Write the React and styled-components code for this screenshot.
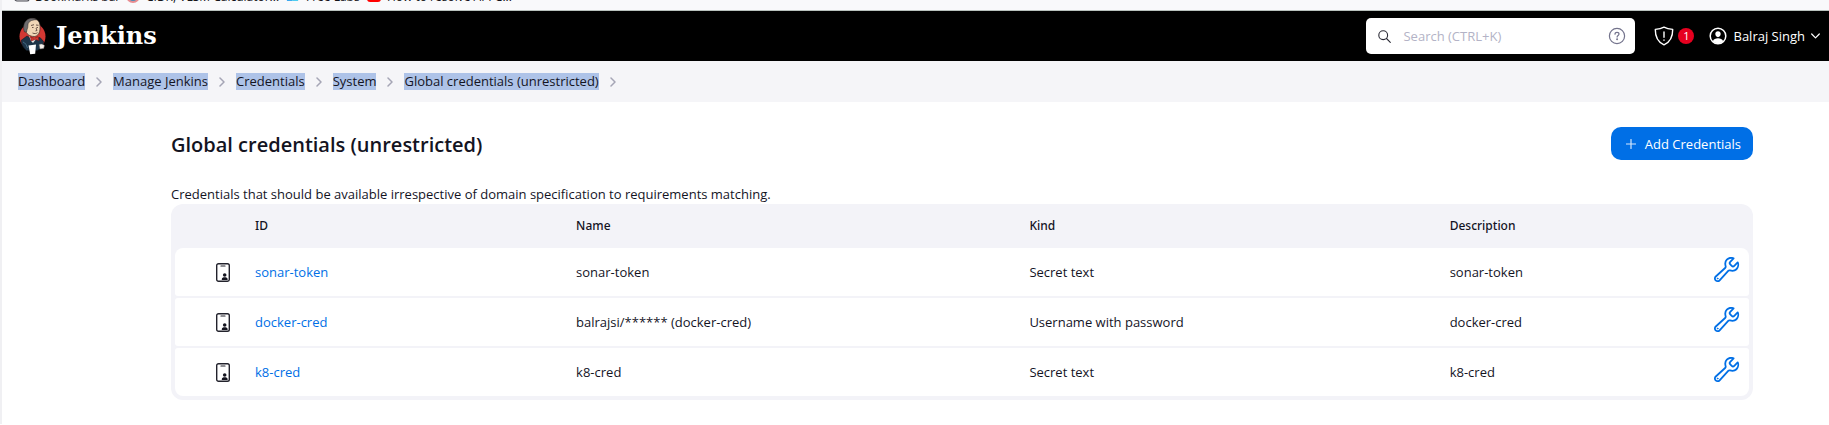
import React from "react";
import styled, { createGlobalStyle } from "styled-components";

const GlobalStyle = createGlobalStyle`
  *, *::before, *::after { box-sizing: border-box; }
  body {
    margin: 0;
    background: #fff;
    color: #14141f;
    font: 13px/20px "Open Sans", "Noto Sans", sans-serif;
  }
  button, input { font: inherit; }
  a { color: inherit; text-decoration: none; }
  svg { display: block; flex: none; }
`;

const Page = styled.div`
  border-left: 2px solid #f0f0f3;
`;

const BookmarksBar = styled.nav`
  display: flex;
  align-items: flex-end;
  height: 11px;
  overflow: hidden;
  padding-left: 12px;
  padding-bottom: 5px;
  gap: 14px;
  background: #f9f9fb;
  border-bottom: 1px solid #b9c1bd;
  font-size: 12px;
  line-height: 16px;
  color: #15141a;
`;

const Bookmark = styled.a`
  display: flex;
  align-items: center;
  gap: 5px;
  width: ${(p) => p.$width}px;
  white-space: nowrap;
`;

const Header = styled.header`
  display: flex;
  align-items: center;
  height: 50px;
  padding: 0 9px 0 16px;
  background: #000;
  color: #fff;
`;

const Brand = styled.a`
  display: flex;
  align-items: center;
  gap: 9px;
  margin-right: auto;
  font: bold 24px/32px "DejaVu Serif", serif;
`;

const SearchBox = styled.div`
  display: flex;
  align-items: center;
  width: 269px;
  height: 36px;
  padding: 0 9px 0 12px;
  background: #fff;
  border-radius: 5px;
`;

const SearchInput = styled.input`
  flex: 1;
  min-width: 0;
  margin-left: 12px;
  padding: 0;
  border: 0;
  outline: 0;
  background: none;
  color: #14141f;
  &::placeholder { color: #b3b3c6; opacity: 1; }
`;

const IconButton = styled.button`
  display: flex;
  align-items: center;
  gap: ${(p) => p.$gap || 0}px;
  padding: 0;
  border: 0;
  background: none;
  color: inherit;
  cursor: pointer;
`;

const HeaderActions = styled.div`
  display: flex;
  align-items: center;
  gap: 15px;
  margin-left: 19px;
`;

const Badge = styled.span`
  width: 16px;
  height: 16px;
  border-radius: 50%;
  background: #e6001f;
  font-size: 11px;
  line-height: 16px;
  text-align: center;
`;

const Breadcrumbs = styled.nav`
  display: flex;
  align-items: center;
  gap: 11px;
  height: 41px;
  padding-left: 16px;
  background: #f5f5f8;
`;

const Crumb = styled.a`
  height: 17px;
  line-height: 17px;
  background: #aec3e8;
`;

const Main = styled.main`
  padding: 25px 76px 24px 169px;
`;

const TitleBar = styled.div`
  display: flex;
  align-items: center;
  justify-content: space-between;
  margin-bottom: 25px;
`;

const Title = styled.h1`
  margin: 3px 0 0;
  font-size: 20px;
  line-height: 30px;
  font-weight: 600;
`;

const AddLink = styled.a`
  display: flex;
  align-items: center;
  gap: 9px;
  height: 33px;
  padding: 0 12px 0 15px;
  border-radius: 10px;
  background: #006fe6;
  color: #fff;
`;

const Intro = styled.p`
  margin: 0;
  line-height: 19px;
`;

const TablePanel = styled.div`
  padding: 0 4px 2px;
  border-radius: 12px;
  background: #f3f3f8;
`;

const Table = styled.table`
  width: 100%;
  table-layout: fixed;
  border-collapse: separate;
  border-spacing: 0 2px;
`;

const Col = styled.col`
  width: ${(p) => p.$width};
`;

const HeadCell = styled.th`
  height: 40px;
  padding: 0 11px;
  font-family: "Noto Sans", sans-serif;
  font-size: 12px;
  font-weight: 500;
  text-align: left;
`;

const Cell = styled.td`
  height: 48px;
  padding: 0 11px;
  background: #fff;
`;

const IconCell = styled(Cell)`
  padding: 0 0 0 41px;
`;

const ActionCell = styled(Cell)`
  padding: 0 9px 4px 0;
`;

const Row = styled.tr`
  & > td:first-child { border-radius: 3px 0 0 3px; }
  & > td:last-child { border-radius: 0 3px 3px 0; }
  &:first-child > td:first-child { border-top-left-radius: 8px; }
  &:first-child > td:last-child { border-top-right-radius: 8px; }
  &:last-child > td:first-child { border-bottom-left-radius: 8px; }
  &:last-child > td:last-child { border-bottom-right-radius: 8px; }
`;

const IdLink = styled.a`
  color: #006fe6;
`;

const ConfigureLink = styled.a`
  display: flex;
  justify-content: flex-end;
  color: #006fe6;
`;

const FolderIcon = () => (
  <svg width="16" height="16" viewBox="0 0 16 16" fill="#e2e2e6" stroke="#4a4a52" strokeWidth="1.2">
    <rect x="1" y="0" width="14" height="12" rx="2" />
  </svg>
);
const CidrIcon = () => (
  <svg width="16" height="16" viewBox="0 0 16 16">
    <circle cx="8" cy="7" r="7" fill="#e88d92" />
    <circle cx="8" cy="8" r="4" fill="#4a8bb5" />
  </svg>
);
const LabsIcon = () => (
  <svg width="16" height="16" viewBox="0 0 16 16">
    <path d="M1 6h8l-2 6H2z" fill="#3fa9ef" />
    <path d="M7 12l2-8h6l-2 8z" fill="#4fcdf0" />
  </svg>
);
const VideoIcon = () => (
  <svg width="16" height="16" viewBox="0 0 16 16">
    <rect x="1" y="1" width="14" height="12" rx="3" fill="#f00" />
    <path d="M6 4l5 3-5 3z" fill="#fff" />
  </svg>
);

const JenkinsLogo = () => (
  <svg width="29" height="38" viewBox="0 0 29 38">
    <ellipse cx="14.5" cy="19.5" rx="13" ry="13.5" fill="#d33833" />
    <path d="M7 12C6 5 9 1.500 14 1.500c6 0 8.500 4 8 9.500 0 5-2 8-5.500 8.500-5 0-8.500-2.500-9.500-7.500z" fill="#f0d6b7" stroke="#3a302c" strokeWidth=".7" />
    <path d="M6.500 15C4.500 10 6 5 9 3c3-2.200 7-2.200 10-.3-4 0-7.500.8-8.800 3.800-.6 2 0 4-1 5.500l-.7 3z" fill="#6d6b6d" stroke="#2b2523" strokeWidth=".5" />
    <path d="M13 8.500l3-.8M18 8l2.500.3M14 10.500h1.500M18.500 10.500H20M18 11l1 2.500-1.500.4M14.500 16c2 1 4 .6 5-.4" fill="none" stroke="#49352f" strokeWidth=".8" />
    <path d="M3 23.500l6-4.500 6 3.500 7-2 3.500 4-.5 6-6 3H8.500C5.500 31 3.500 28 3 23.500z" fill="#1d3448" stroke="#101820" strokeWidth=".6" />
    <path d="M11 19l3 2.500 5-.5-4 5-2-2z" fill="#e9e6e4" />
    <path d="M12.500 20l3.800 1.500L20 19.500l1 4-3.800-1-4 1.500z" fill="#d33833" stroke="#81110f" strokeWidth=".5" />
    <path d="M5 25c2.500 1 3.500 3 4.500 6" fill="none" stroke="#48728b" strokeWidth=".9" />
    <path d="M10.500 28.500l7.500-1-.8 9.200-5 .5z" fill="#fff" />
    <path d="M21 27.500c2-1 4-.5 5.500 1l-.8 3-3.700.5z" fill="#f5efe9" stroke="#5e5d5d" strokeWidth=".5" />
  </svg>
);

const Chevron = () => (
  <svg width="6" height="10" viewBox="0 0 6 10" fill="none" stroke="#a5a5b5" strokeWidth="1.500" strokeLinecap="round" strokeLinejoin="round">
    <path d="M1 1l4 4-4 4" />
  </svg>
);
const ChevronDown = () => (
  <svg width="9" height="6" viewBox="0 0 9 6" fill="none" stroke="#fff" strokeWidth="1.200" strokeLinecap="round" strokeLinejoin="round">
    <path d="M.7 1l3.800 3.800L8.300 1" />
  </svg>
);
const SearchIcon = () => (
  <svg width="13" height="13" viewBox="0 0 13 13" fill="none" stroke="#2a2a35" strokeWidth="1.100" strokeLinecap="round">
    <circle cx="5.200" cy="5.200" r="4.400" />
    <path d="M8.500 8.500l3.800 3.800" />
  </svg>
);
const HelpIcon = () => (
  <svg width="18" height="18" viewBox="0 0 18 18" fill="none" stroke="#73738c" strokeWidth="1.200" strokeLinecap="round" strokeLinejoin="round">
    <circle cx="9" cy="9" r="7.600" />
    <path d="M7 7.200C7 5.900 7.900 5.300 9 5.300s2 .7 2 1.800c0 1.400-1.900 1.500-1.900 3" />
    <circle cx="9.100" cy="12.300" r=".4" fill="#73738c" />
  </svg>
);
const ShieldIcon = () => (
  <svg width="20" height="20" viewBox="0 0 20 20" fill="none" stroke="#fff" strokeWidth="1.400" strokeLinecap="round" strokeLinejoin="round">
    <path d="M10 1.200C7.500 2.600 4.500 3.200 1.300 3.400 1.200 10.500 3.500 15.800 10 18.800c6.500-3 8.800-8.300 8.700-15.400C15.500 3.200 12.500 2.600 10 1.200z" />
    <path d="M10 6v5.200M10 14v.2" />
  </svg>
);
const PersonIcon = () => (
  <svg width="18" height="18" viewBox="0 0 18 18">
    <circle cx="9" cy="9" r="7.800" fill="none" stroke="#fff" strokeWidth="1.500" />
    <path d="M9 4.200c1.700 0 2.800 1.200 2.700 2.900C11.600 8.900 10.400 10.200 9 10.200S6.400 8.900 6.300 7.100C6.200 5.400 7.300 4.200 9 4.200zM3.800 14.200c.9-2 2.900-2.900 5.200-2.900s4.300.9 5.200 2.900C12.900 15.600 11.100 16.400 9 16.400s-3.900-.8-5.200-2.200z" fill="#fff" />
  </svg>
);
const PlusIcon = () => (
  <svg width="10" height="10" viewBox="0 0 10 10" stroke="#d5e7fb" strokeWidth="1.200" strokeLinecap="round">
    <path d="M5 .5v9M.5 5h9" />
  </svg>
);
const CredentialIcon = () => (
  <svg width="14" height="19" viewBox="0 0 14 19">
    <rect x=".7" y=".7" width="12.600" height="17.600" rx="1.800" fill="none" stroke="#22222c" strokeWidth="1.400" />
    <path d="M5 3h4" stroke="#22222c" strokeWidth="1.200" strokeLinecap="round" />
    <circle cx="8.700" cy="12" r="1.800" fill="#14141f" />
    <path d="M5.800 17v-.8c0-1.500 1.300-2 2.900-2s2.900.5 2.900 2v.8z" fill="#14141f" />
  </svg>
);
const WrenchIcon = () => (
  <svg width="26" height="26" viewBox="32 32 464 464" fill="none" stroke="currentColor" strokeWidth="32" strokeLinecap="round" strokeLinejoin="round">
    <path d="M393.870 190a32.100 32.100 0 01-45.250 0l-26.570-26.570a32.090 32.090 0 010-45.260L382.190 58a1 1 0 00-.3-1.640c-38.820-16.640-89.150-8.160-121.110 23.570-30.580 30.350-32.320 76-21.120 115.840a31.930 31.930 0 01-9.060 32.080L64 380a48.170 48.170 0 1068 68l153.860-167a31.930 31.930 0 0131.600-9.130c39.540 10.590 84.540 8.600 114.720-21.190 32.490-32 39.500-88.560 23.750-120.930a1 1 0 00-1.600-.26z" />
    <circle cx="96" cy="416" r="8" fill="currentColor" strokeWidth="14" />
  </svg>
);

const bookmarks = [
  { label: "Bookmarks bar", icon: FolderIcon, width: 97 },
  { label: "CIDR, VLSM Calculator...", icon: CidrIcon, width: 146 },
  { label: "Free Labs", icon: LabsIcon, width: 67 },
  { label: "How to resolve API C...", icon: VideoIcon, width: 150 },
];

const crumbs = ["Dashboard", "Manage Jenkins", "Credentials", "System", "Global credentials (unrestricted)"];

const credentials = [
  { id: "sonar-token", name: "sonar-token", kind: "Secret text", description: "sonar-token" },
  { id: "docker-cred", name: "balrajsi/****** (docker-cred)", kind: "Username with password", description: "docker-cred" },
  { id: "k8-cred", name: "k8-cred", kind: "Secret text", description: "k8-cred" },
];

export default function App() {
  return (
    <Page>
      <GlobalStyle />
      <BookmarksBar aria-label="Bookmarks">
        {bookmarks.map(({ label, icon: Icon, width }) => (
          <Bookmark key={label} href="#" $width={width}>
            <Icon />
            {label}
          </Bookmark>
        ))}
      </BookmarksBar>
      <Header>
        <Brand href="#">
          <JenkinsLogo />
          Jenkins
        </Brand>
        <SearchBox role="search">
          <SearchIcon />
          <SearchInput type="text" aria-label="Search" placeholder="Search (CTRL+K)" />
          <IconButton type="button" aria-label="Search help">
            <HelpIcon />
          </IconButton>
        </SearchBox>
        <HeaderActions>
          <IconButton type="button" $gap={4} aria-label="Security warnings">
            <ShieldIcon />
            <Badge>1</Badge>
          </IconButton>
          <IconButton type="button" $gap={6}>
            <PersonIcon />
            Balraj Singh
            <ChevronDown />
          </IconButton>
        </HeaderActions>
      </Header>
      <Breadcrumbs aria-label="Breadcrumb">
        {crumbs.map((crumb) => (
          <React.Fragment key={crumb}>
            <Crumb href="#">{crumb}</Crumb>
            <Chevron />
          </React.Fragment>
        ))}
      </Breadcrumbs>
      <Main>
        <TitleBar>
          <Title>Global credentials (unrestricted)</Title>
          <AddLink href="#">
            <PlusIcon />
            Add Credentials
          </AddLink>
        </TitleBar>
        <Intro>Credentials that should be available irrespective of domain specification to requirements matching.</Intro>
        <TablePanel>
          <Table>
            <colgroup>
              <Col $width="69px" />
              <Col $width="20.4%" />
              <Col $width="28.8%" />
              <Col $width="26.7%" />
              <Col />
              <Col $width="60px" />
            </colgroup>
            <thead>
              <tr>
                <HeadCell aria-label="Type" />
                <HeadCell scope="col">ID</HeadCell>
                <HeadCell scope="col">Name</HeadCell>
                <HeadCell scope="col">Kind</HeadCell>
                <HeadCell scope="col">Description</HeadCell>
                <HeadCell aria-label="Actions" />
              </tr>
            </thead>
            <tbody>
              {credentials.map((c) => (
                <Row key={c.id}>
                  <IconCell><CredentialIcon /></IconCell>
                  <Cell><IdLink href="#">{c.id}</IdLink></Cell>
                  <Cell>{c.name}</Cell>
                  <Cell>{c.kind}</Cell>
                  <Cell>{c.description}</Cell>
                  <ActionCell>
                    <ConfigureLink href="#" aria-label={`Update ${c.id}`}>
                      <WrenchIcon />
                    </ConfigureLink>
                  </ActionCell>
                </Row>
              ))}
            </tbody>
          </Table>
        </TablePanel>
      </Main>
    </Page>
  );
}
